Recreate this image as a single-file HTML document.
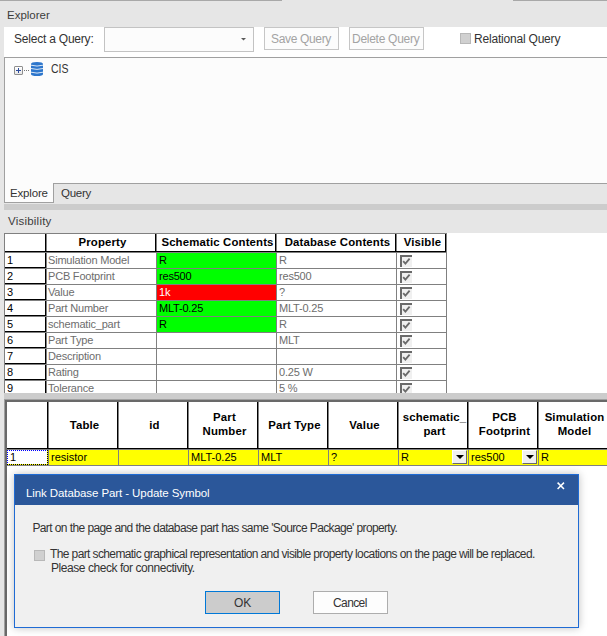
<!DOCTYPE html>
<html><head><meta charset="utf-8">
<style>
*{box-sizing:border-box;margin:0;padding:0}
html,body{width:607px;height:636px;overflow:hidden;background:#e6e6e6;font-family:"Liberation Sans",sans-serif;position:relative}
.a{position:absolute}
.t{position:absolute;white-space:nowrap;line-height:1}
.g{font-size:11px;letter-spacing:-0.3px}
.hb{font-size:11.4px;font-weight:700;color:#000;letter-spacing:0.15px}
.ui{font-size:11.5px;color:#222}
</style></head><body>

<div class="a" style="left:0px;top:0px;width:282px;height:1px;background:#a8a8a8"></div>
<div class="a" style="left:513px;top:0px;width:94px;height:1px;background:#a8a8a8"></div>
<div class="t" style="left:7px;top:10px;font-size:11.5px;letter-spacing:0.0px;color:#3c3c3c">Explorer</div>
<div class="a" style="left:4px;top:27px;width:603px;height:30px;background:#fff"></div>
<div class="t" style="left:14px;top:33px;font-size:12px;letter-spacing:-0.214px;color:#333">Select a Query:</div>
<div class="a" style="left:104px;top:27px;width:150px;height:25px;border:1px solid #c3c3c3;background:#fcfcfc"></div>
<svg class="a" style="left:240px;top:37px" width="8" height="5"><path d="M1 1 H6 L3.5 3.6 Z" fill="#5a5a5a"/></svg>
<div class="a" style="left:264px;top:27px;width:75px;height:23px;border:1px solid #c6c6c6;background:#fcfcfc"></div>
<div class="t" style="left:271px;top:33px;font-size:12px;letter-spacing:-0.333px;color:#a3a3a3">Save Query</div>
<div class="a" style="left:349px;top:27px;width:75px;height:23px;border:1px solid #c6c6c6;background:#fcfcfc"></div>
<div class="t" style="left:352px;top:33px;font-size:12px;letter-spacing:-0.273px;color:#a3a3a3">Delete Query</div>
<div class="a" style="left:460px;top:33px;width:11px;height:11px;border:1px solid #b8b8b8;background:#d0d0d0"></div>
<div class="t" style="left:474px;top:33px;font-size:12px;letter-spacing:-0.2px;color:#333">Relational Query</div>
<div class="a" style="left:4px;top:57px;width:603px;height:126px;border-top:1px solid #a0a0a0;border-left:1px solid #a0a0a0;background:#fcfcfc"></div>
<div class="a" style="left:53px;top:183px;width:554px;height:1px;background:#a0a0a0"></div>
<div class="a" style="left:14px;top:66px;width:9px;height:9px;border:1px solid #8e8e8e;border-radius:1px;background:linear-gradient(#fff,#e6e6e6)"></div>
<div class="a" style="left:16px;top:70px;width:5px;height:1px;background:#2c4b9b"></div>
<div class="a" style="left:18px;top:68px;width:1px;height:5px;background:#2c4b9b"></div>
<div class="a" style="left:24px;top:70px;width:1px;height:1px;background:#777"></div>
<div class="a" style="left:26px;top:70px;width:1px;height:1px;background:#777"></div>
<div class="a" style="left:28px;top:70px;width:1px;height:1px;background:#777"></div>
<svg class="a" style="left:31px;top:62px" width="12" height="14" viewBox="0 0 12 14">
 <path d="M0 2 Q0 0 6 0 Q12 0 12 2 L12 12 Q12 14 6 14 Q0 14 0 12 Z" fill="#2d76cc"/>
 <path d="M0 3.2 Q6 4.9 12 3.2" stroke="#eef4fb" stroke-width="0.9" fill="none"/>
 <path d="M0 6.5 Q6 8.3 12 6.5" stroke="#eef4fb" stroke-width="0.9" fill="none"/>
 <path d="M0 10.2 Q6 12 12 10.2" stroke="#eef4fb" stroke-width="0.9" fill="none"/>
</svg>
<div class="t" style="left:50.5px;top:62.5px;font-size:12.5px;letter-spacing:0px;transform:scaleX(0.84);transform-origin:0 0;color:#333">CIS</div>
<div class="a" style="left:4px;top:183px;width:50px;height:20px;background:#fcfcfc;border-left:1px solid #a0a0a0;border-right:1px solid #a0a0a0;border-bottom:1px solid #a0a0a0"></div>
<div class="t" style="left:10px;top:188px;font-size:11.5px;letter-spacing:-0.167px;color:#333">Explore</div>
<div class="t" style="left:61px;top:188px;font-size:11.5px;letter-spacing:-0.25px;color:#333">Query</div>
<div class="a" style="left:4px;top:204px;width:603px;height:6px;background:#cccccc"></div>
<div class="t" style="left:8px;top:216px;font-size:11.5px;letter-spacing:0.222px;color:#3c3c3c">Visibility</div>
<div class="a" style="left:4px;top:233px;width:603px;height:160px;background:#fff;overflow:hidden"></div>
<div class="a" style="left:4px;top:233px;width:603px;height:160px;overflow:hidden">
<div class="a" style="left:0px;top:0px;width:443px;height:1px;background:#808080"></div>
<div class="a" style="left:0px;top:0px;width:1px;height:160px;background:#808080"></div>
<div class="a" style="left:42px;top:1px;width:1px;height:160px;background:#808080"></div>
<div class="a" style="left:152px;top:1px;width:1px;height:160px;background:#808080"></div>
<div class="a" style="left:272px;top:1px;width:1px;height:160px;background:#808080"></div>
<div class="a" style="left:392px;top:1px;width:1px;height:160px;background:#808080"></div>
<div class="a" style="left:442px;top:1px;width:1px;height:160px;background:#808080"></div>
<div class="a" style="left:41px;top:1px;width:1px;height:18px;background:#000"></div>
<div class="a" style="left:151px;top:1px;width:1px;height:18px;background:#000"></div>
<div class="a" style="left:271px;top:1px;width:1px;height:18px;background:#000"></div>
<div class="a" style="left:391px;top:1px;width:1px;height:18px;background:#000"></div>
<div class="a" style="left:441px;top:1px;width:1px;height:18px;background:#000"></div>
<div class="a" style="left:41px;top:1px;width:1px;height:160px;background:#000"></div>
<div class="a" style="left:1px;top:18px;width:441px;height:1px;background:#000"></div>
<div class="t hb" style="left:44px;top:4px;width:109px;text-align:center">Property</div>
<div class="t hb" style="left:154px;top:4px;width:119px;text-align:center">Schematic Contents</div>
<div class="t hb" style="left:274px;top:4px;width:119px;text-align:center">Database Contents</div>
<div class="t hb" style="left:394px;top:4px;width:49px;text-align:center">Visible</div>
<div class="a" style="left:1px;top:19px;width:441px;height:1px;background:#808080"></div>
<div class="a" style="left:42px;top:19px;width:401px;height:1px;background:#808080"></div>
<div class="a" style="left:153px;top:20px;width:119px;height:15px;background:#00ff00"></div>
<div class="a" style="left:1px;top:34px;width:40px;height:1px;background:#000"></div>
<div class="t" style="left:3px;top:22px;font-size:11px;color:#000">1</div>
<div class="t" style="left:44px;top:22px;font-size:11px;letter-spacing:-0.2px;color:#6d6d6d">Simulation Model</div>
<div class="t" style="left:155px;top:22px;font-size:11px;letter-spacing:-0.2px;color:#000">R</div>
<div class="t" style="left:275px;top:22px;font-size:11px;letter-spacing:-0.2px;color:#6d6d6d">R</div>
<div class="a" style="left:396px;top:22px;width:12px;height:12px;background:#f0f0f0;border-top:2px solid #6a6a6a;border-left:2px solid #6a6a6a"></div>
<svg class="a" style="left:396px;top:22px" width="12" height="12" viewBox="0 0 12 12"><path d="M3.2 6.2 L5.4 8.6 L9.6 3.6" stroke="#6a6a6a" stroke-width="1.8" fill="none"/></svg>
<div class="a" style="left:1px;top:35px;width:441px;height:1px;background:#808080"></div>
<div class="a" style="left:42px;top:35px;width:401px;height:1px;background:#808080"></div>
<div class="a" style="left:153px;top:36px;width:119px;height:15px;background:#00ff00"></div>
<div class="a" style="left:1px;top:50px;width:40px;height:1px;background:#000"></div>
<div class="t" style="left:3px;top:38px;font-size:11px;color:#000">2</div>
<div class="t" style="left:44px;top:38px;font-size:11px;letter-spacing:-0.2px;color:#6d6d6d">PCB Footprint</div>
<div class="t" style="left:155px;top:38px;font-size:11px;letter-spacing:-0.2px;color:#000">res500</div>
<div class="t" style="left:275px;top:38px;font-size:11px;letter-spacing:-0.2px;color:#6d6d6d">res500</div>
<div class="a" style="left:396px;top:38px;width:12px;height:12px;background:#f0f0f0;border-top:2px solid #6a6a6a;border-left:2px solid #6a6a6a"></div>
<svg class="a" style="left:396px;top:38px" width="12" height="12" viewBox="0 0 12 12"><path d="M3.2 6.2 L5.4 8.6 L9.6 3.6" stroke="#6a6a6a" stroke-width="1.8" fill="none"/></svg>
<div class="a" style="left:1px;top:51px;width:441px;height:1px;background:#808080"></div>
<div class="a" style="left:42px;top:51px;width:401px;height:1px;background:#808080"></div>
<div class="a" style="left:153px;top:52px;width:119px;height:15px;background:#ff0000"></div>
<div class="a" style="left:1px;top:66px;width:40px;height:1px;background:#000"></div>
<div class="t" style="left:3px;top:54px;font-size:11px;color:#000">3</div>
<div class="t" style="left:44px;top:54px;font-size:11px;letter-spacing:-0.2px;color:#6d6d6d">Value</div>
<div class="t" style="left:155px;top:54px;font-size:11px;letter-spacing:-0.2px;color:#fff">1k</div>
<div class="t" style="left:275px;top:54px;font-size:11px;letter-spacing:-0.2px;color:#6d6d6d">?</div>
<div class="a" style="left:396px;top:54px;width:12px;height:12px;background:#f0f0f0;border-top:2px solid #6a6a6a;border-left:2px solid #6a6a6a"></div>
<svg class="a" style="left:396px;top:54px" width="12" height="12" viewBox="0 0 12 12"><path d="M3.2 6.2 L5.4 8.6 L9.6 3.6" stroke="#6a6a6a" stroke-width="1.8" fill="none"/></svg>
<div class="a" style="left:1px;top:67px;width:441px;height:1px;background:#808080"></div>
<div class="a" style="left:42px;top:67px;width:401px;height:1px;background:#808080"></div>
<div class="a" style="left:153px;top:68px;width:119px;height:15px;background:#00ff00"></div>
<div class="a" style="left:1px;top:82px;width:40px;height:1px;background:#000"></div>
<div class="t" style="left:3px;top:70px;font-size:11px;color:#000">4</div>
<div class="t" style="left:44px;top:70px;font-size:11px;letter-spacing:-0.2px;color:#6d6d6d">Part Number</div>
<div class="t" style="left:155px;top:70px;font-size:11px;letter-spacing:-0.2px;color:#000">MLT-0.25</div>
<div class="t" style="left:275px;top:70px;font-size:11px;letter-spacing:-0.2px;color:#6d6d6d">MLT-0.25</div>
<div class="a" style="left:396px;top:70px;width:12px;height:12px;background:#f0f0f0;border-top:2px solid #6a6a6a;border-left:2px solid #6a6a6a"></div>
<svg class="a" style="left:396px;top:70px" width="12" height="12" viewBox="0 0 12 12"><path d="M3.2 6.2 L5.4 8.6 L9.6 3.6" stroke="#6a6a6a" stroke-width="1.8" fill="none"/></svg>
<div class="a" style="left:1px;top:83px;width:441px;height:1px;background:#808080"></div>
<div class="a" style="left:42px;top:83px;width:401px;height:1px;background:#808080"></div>
<div class="a" style="left:153px;top:84px;width:119px;height:15px;background:#00ff00"></div>
<div class="a" style="left:1px;top:98px;width:40px;height:1px;background:#000"></div>
<div class="t" style="left:3px;top:86px;font-size:11px;color:#000">5</div>
<div class="t" style="left:44px;top:86px;font-size:11px;letter-spacing:-0.2px;color:#6d6d6d">schematic_part</div>
<div class="t" style="left:155px;top:86px;font-size:11px;letter-spacing:-0.2px;color:#000">R</div>
<div class="t" style="left:275px;top:86px;font-size:11px;letter-spacing:-0.2px;color:#6d6d6d">R</div>
<div class="a" style="left:396px;top:86px;width:12px;height:12px;background:#f0f0f0;border-top:2px solid #6a6a6a;border-left:2px solid #6a6a6a"></div>
<svg class="a" style="left:396px;top:86px" width="12" height="12" viewBox="0 0 12 12"><path d="M3.2 6.2 L5.4 8.6 L9.6 3.6" stroke="#6a6a6a" stroke-width="1.8" fill="none"/></svg>
<div class="a" style="left:1px;top:99px;width:441px;height:1px;background:#808080"></div>
<div class="a" style="left:42px;top:99px;width:401px;height:1px;background:#808080"></div>
<div class="a" style="left:1px;top:114px;width:40px;height:1px;background:#000"></div>
<div class="t" style="left:3px;top:102px;font-size:11px;color:#000">6</div>
<div class="t" style="left:44px;top:102px;font-size:11px;letter-spacing:-0.2px;color:#6d6d6d">Part Type</div>
<div class="t" style="left:275px;top:102px;font-size:11px;letter-spacing:-0.2px;color:#6d6d6d">MLT</div>
<div class="a" style="left:396px;top:102px;width:12px;height:12px;background:#f0f0f0;border-top:2px solid #6a6a6a;border-left:2px solid #6a6a6a"></div>
<svg class="a" style="left:396px;top:102px" width="12" height="12" viewBox="0 0 12 12"><path d="M3.2 6.2 L5.4 8.6 L9.6 3.6" stroke="#6a6a6a" stroke-width="1.8" fill="none"/></svg>
<div class="a" style="left:1px;top:115px;width:441px;height:1px;background:#808080"></div>
<div class="a" style="left:42px;top:115px;width:401px;height:1px;background:#808080"></div>
<div class="a" style="left:1px;top:130px;width:40px;height:1px;background:#000"></div>
<div class="t" style="left:3px;top:118px;font-size:11px;color:#000">7</div>
<div class="t" style="left:44px;top:118px;font-size:11px;letter-spacing:-0.2px;color:#6d6d6d">Description</div>
<div class="a" style="left:396px;top:118px;width:12px;height:12px;background:#f0f0f0;border-top:2px solid #6a6a6a;border-left:2px solid #6a6a6a"></div>
<svg class="a" style="left:396px;top:118px" width="12" height="12" viewBox="0 0 12 12"><path d="M3.2 6.2 L5.4 8.6 L9.6 3.6" stroke="#6a6a6a" stroke-width="1.8" fill="none"/></svg>
<div class="a" style="left:1px;top:131px;width:441px;height:1px;background:#808080"></div>
<div class="a" style="left:42px;top:131px;width:401px;height:1px;background:#808080"></div>
<div class="a" style="left:1px;top:146px;width:40px;height:1px;background:#000"></div>
<div class="t" style="left:3px;top:134px;font-size:11px;color:#000">8</div>
<div class="t" style="left:44px;top:134px;font-size:11px;letter-spacing:-0.2px;color:#6d6d6d">Rating</div>
<div class="t" style="left:275px;top:134px;font-size:11px;letter-spacing:-0.2px;color:#6d6d6d">0.25 W</div>
<div class="a" style="left:396px;top:134px;width:12px;height:12px;background:#f0f0f0;border-top:2px solid #6a6a6a;border-left:2px solid #6a6a6a"></div>
<svg class="a" style="left:396px;top:134px" width="12" height="12" viewBox="0 0 12 12"><path d="M3.2 6.2 L5.4 8.6 L9.6 3.6" stroke="#6a6a6a" stroke-width="1.8" fill="none"/></svg>
<div class="a" style="left:1px;top:147px;width:441px;height:1px;background:#808080"></div>
<div class="a" style="left:42px;top:147px;width:401px;height:1px;background:#808080"></div>
<div class="a" style="left:1px;top:162px;width:40px;height:1px;background:#000"></div>
<div class="t" style="left:3px;top:150px;font-size:11px;color:#000">9</div>
<div class="t" style="left:44px;top:150px;font-size:11px;letter-spacing:-0.2px;color:#6d6d6d">Tolerance</div>
<div class="t" style="left:275px;top:150px;font-size:11px;letter-spacing:-0.2px;color:#6d6d6d">5 %</div>
<div class="a" style="left:396px;top:150px;width:12px;height:12px;background:#f0f0f0;border-top:2px solid #6a6a6a;border-left:2px solid #6a6a6a"></div>
<svg class="a" style="left:396px;top:150px" width="12" height="12" viewBox="0 0 12 12"><path d="M3.2 6.2 L5.4 8.6 L9.6 3.6" stroke="#6a6a6a" stroke-width="1.8" fill="none"/></svg>
</div>
<div class="a" style="left:4px;top:393px;width:603px;height:6px;background:#cccccc"></div>
<div class="a" style="left:4px;top:399px;width:603px;height:237px;background:#fff;border-left:1px solid #a0a0a0;border-top:1px solid #a0a0a0"></div>
<div class="a" style="left:5px;top:400px;width:602px;height:236px;border-left:2px solid #696969;border-top:2px solid #696969"></div>
<div class="a" style="left:47px;top:402px;width:1px;height:47px;background:#000"></div>
<div class="a" style="left:48px;top:402px;width:1px;height:64px;background:#808080"></div>
<div class="a" style="left:117px;top:402px;width:1px;height:47px;background:#000"></div>
<div class="a" style="left:118px;top:402px;width:1px;height:64px;background:#808080"></div>
<div class="a" style="left:187px;top:402px;width:1px;height:47px;background:#000"></div>
<div class="a" style="left:188px;top:402px;width:1px;height:64px;background:#808080"></div>
<div class="a" style="left:257px;top:402px;width:1px;height:47px;background:#000"></div>
<div class="a" style="left:258px;top:402px;width:1px;height:64px;background:#808080"></div>
<div class="a" style="left:327px;top:402px;width:1px;height:47px;background:#000"></div>
<div class="a" style="left:328px;top:402px;width:1px;height:64px;background:#808080"></div>
<div class="a" style="left:397px;top:402px;width:1px;height:47px;background:#000"></div>
<div class="a" style="left:398px;top:402px;width:1px;height:64px;background:#808080"></div>
<div class="a" style="left:467px;top:402px;width:1px;height:47px;background:#000"></div>
<div class="a" style="left:468px;top:402px;width:1px;height:64px;background:#808080"></div>
<div class="a" style="left:537px;top:402px;width:1px;height:47px;background:#000"></div>
<div class="a" style="left:538px;top:402px;width:1px;height:64px;background:#808080"></div>
<div class="a" style="left:607px;top:402px;width:1px;height:47px;background:#000"></div>
<div class="a" style="left:608px;top:402px;width:1px;height:64px;background:#808080"></div>
<div class="a" style="left:7px;top:448px;width:600px;height:1px;background:#000"></div>
<div class="t hb" style="left:50px;top:418px;width:69px;text-align:center;line-height:14px">Table</div>
<div class="t hb" style="left:120px;top:418px;width:69px;text-align:center;line-height:14px">id</div>
<div class="t hb" style="left:190px;top:410px;width:69px;text-align:center;line-height:14px">Part<br>Number</div>
<div class="t hb" style="left:260px;top:418px;width:69px;text-align:center;line-height:14px">Part Type</div>
<div class="t hb" style="left:330px;top:418px;width:69px;text-align:center;line-height:14px">Value</div>
<div class="t hb" style="left:400px;top:410px;width:69px;text-align:center;line-height:14px">schematic_<br>part</div>
<div class="t hb" style="left:470px;top:410px;width:69px;text-align:center;line-height:14px">PCB<br>Footprint</div>
<div class="t hb" style="left:540px;top:410px;width:69px;text-align:center;line-height:14px">Simulation<br>Model</div>
<div class="a" style="left:48px;top:450px;width:559px;height:15px;background:#ffff00"></div>
<div class="a" style="left:7px;top:449px;width:600px;height:1px;background:#808080"></div>
<div class="a" style="left:7px;top:465px;width:600px;height:1px;background:#808080"></div>
<div class="a" style="left:48px;top:449px;width:1px;height:17px;background:#808080"></div>
<div class="a" style="left:118px;top:449px;width:1px;height:17px;background:#808080"></div>
<div class="a" style="left:188px;top:449px;width:1px;height:17px;background:#808080"></div>
<div class="a" style="left:258px;top:449px;width:1px;height:17px;background:#808080"></div>
<div class="a" style="left:328px;top:449px;width:1px;height:17px;background:#808080"></div>
<div class="a" style="left:398px;top:449px;width:1px;height:17px;background:#808080"></div>
<div class="a" style="left:468px;top:449px;width:1px;height:17px;background:#808080"></div>
<div class="a" style="left:538px;top:449px;width:1px;height:17px;background:#808080"></div>
<div class="a" style="left:608px;top:449px;width:1px;height:17px;background:#808080"></div>
<div class="a" style="left:7px;top:450px;width:41px;height:15px;background:#fff"></div>
<div class="a" style="left:7px;top:450px;width:41px;height:1px;background:#fff;border-top:1px dotted #0000ff"></div>
<div class="a" style="left:7px;top:450px;width:1px;height:15px;background:#fff;border-left:1px dotted #0000ff"></div>
<div class="a" style="left:7px;top:464px;width:41px;height:1px;background:#ffff00;border-top:1px dotted #000"></div>
<div class="a" style="left:47px;top:450px;width:1px;height:15px;background:#ffff00;border-left:1px dotted #000"></div>
<div class="t" style="left:10px;top:452px;font-size:11px;color:#000">1</div>
<div class="t" style="left:51px;top:452px;font-size:11px;letter-spacing:0px;color:#000">resistor</div>
<div class="t" style="left:191px;top:452px;font-size:11px;letter-spacing:0px;color:#000">MLT-0.25</div>
<div class="t" style="left:261px;top:452px;font-size:11px;letter-spacing:0px;color:#000">MLT</div>
<div class="t" style="left:331px;top:452px;font-size:11px;letter-spacing:0px;color:#000">?</div>
<div class="t" style="left:401px;top:452px;font-size:11px;letter-spacing:0px;color:#000">R</div>
<div class="t" style="left:471px;top:452px;font-size:11px;letter-spacing:0px;color:#000">res500</div>
<div class="t" style="left:541px;top:452px;font-size:11px;letter-spacing:0px;color:#000">R</div>
<div class="a" style="left:452px;top:450px;width:15px;height:14px;background:#f0f0f0;border-top:1px solid #fff;border-left:1px solid #fff;border-right:1px solid #696969;border-bottom:1px solid #696969"></div>
<div class="a" style="left:456px;top:455px;width:0px;height:0px;border-left:4px solid transparent;border-right:4px solid transparent;border-top:4px solid #000"></div>
<div class="a" style="left:522px;top:450px;width:15px;height:14px;background:#f0f0f0;border-top:1px solid #fff;border-left:1px solid #fff;border-right:1px solid #696969;border-bottom:1px solid #696969"></div>
<div class="a" style="left:526px;top:455px;width:0px;height:0px;border-left:4px solid transparent;border-right:4px solid transparent;border-top:4px solid #000"></div>
<div class="a" style="left:14px;top:474px;width:565px;height:154px;background:#f0f0f0;border:1px solid #1f6bd4;box-shadow:0 0 8px rgba(0,0,0,.25)"></div>
<div class="a" style="left:15px;top:475px;width:563px;height:30px;background:#2b579a"></div>
<div class="t" style="left:26px;top:488px;font-size:11.5px;letter-spacing:-0.091px;color:#fff">Link Database Part - Update Symbol</div>
<svg class="a" style="left:555px;top:480px;overflow:visible" width="12" height="12" viewBox="0 0 12 12"><path d="M2.6 2.6 L9 9 M9 2.6 L2.6 9" stroke="#fff" stroke-width="1.5"/></svg>
<div class="t" style="left:32.5px;top:522px;font-size:12px;letter-spacing:-0.655px;word-spacing:0.26px;color:#333">Part on the page and the database part has same 'Source Package' property.</div>
<div class="a" style="left:34px;top:550px;width:11px;height:11px;border:1px solid #b8b8b8;background:#d0d0d0"></div>
<div class="t" style="left:50px;top:548px;font-size:12px;letter-spacing:-0.612px;color:#333">The part schematic graphical representation and visible property locations on the page will be replaced.</div>
<div class="t" style="left:51px;top:562px;font-size:12px;letter-spacing:-0.448px;color:#333">Please check for connectivity.</div>
<div class="a" style="left:205px;top:591px;width:75px;height:23px;background:#cccccc;border:1px solid #0078d7"></div>
<div class="t" style="left:234px;top:597px;font-size:12px;letter-spacing:0.0px;color:#333">OK</div>
<div class="a" style="left:313px;top:591px;width:75px;height:23px;background:#fdfdfd;border:1px solid #adadad"></div>
<div class="t" style="left:333px;top:597px;font-size:12px;letter-spacing:-0.6px;color:#333">Cancel</div>
</body></html>
